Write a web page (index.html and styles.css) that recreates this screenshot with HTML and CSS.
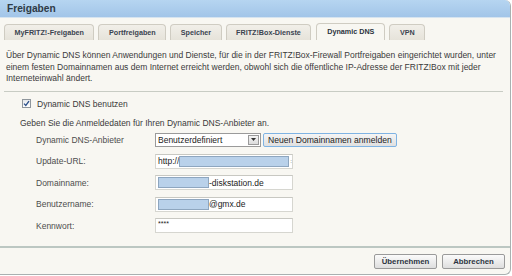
FILE: index.html
```html
<!DOCTYPE html>
<html lang="de">
<head>
<meta charset="utf-8">
<title>Freigaben</title>
<link rel="stylesheet" href="styles.css">
</head>
<body>
<div class="panel">
  <div class="header">Freigaben</div>
  <div class="tabs">
    <div class="tab">MyFRITZ!-Freigaben</div>
    <div class="tab">Portfreigaben</div>
    <div class="tab">Speicher</div>
    <div class="tab">FRITZ!Box-Dienste</div>
    <div class="tab active">Dynamic DNS</div>
    <div class="tab">VPN</div>
  </div>
  <div class="content">
    <p class="intro">Über Dynamic DNS können Anwendungen und Dienste, für die in der FRITZ!Box-Firewall Portfreigaben eingerichtet wurden, unter einem festen Domainnamen aus dem Internet erreicht werden, obwohl sich die öffentliche IP-Adresse der FRITZ!Box mit jeder Interneteinwahl ändert.</p>
    <div class="sep"></div>
    <label class="check-row"><span class="checkbox"><svg width="7" height="7" viewBox="0 0 7 7"><path d="M1 3.6 L2.8 5.4 L6 1.2" fill="none" stroke="#2a4f8a" stroke-width="1.3"/></svg></span>Dynamic DNS benutzen</label>
    <p class="hint">Geben Sie die Anmeldedaten für Ihren Dynamic DNS-Anbieter an.</p>
    <div class="form">
      <div class="label">Dynamic DNS-Anbieter</div>
      <div class="ctrl">
        <div class="select"><span class="sel-text">Benutzerdefiniert</span><span class="sel-arrow"><svg width="5" height="3" viewBox="0 0 5 3"><path d="M0 0 H5 L2.5 3 Z" fill="#333"/></svg></span></div>
        <div class="btn-new">Neuen Domainnamen anmelden</div>
      </div>
      <div class="label">Update-URL:</div>
      <div class="ctrl"><div class="input"><span>http://</span><span class="mask mask-url"></span><span class="tail">:</span></div></div>
      <div class="label">Domainname:</div>
      <div class="ctrl"><div class="input"><span class="mask mask-short"></span><span>-diskstation.de</span></div></div>
      <div class="label">Benutzername:</div>
      <div class="ctrl"><div class="input"><span class="mask mask-short"></span><span>@gmx.de</span></div></div>
      <div class="label">Kennwort:</div>
      <div class="ctrl"><div class="input pw"><span>****</span></div></div>
    </div>
  </div>
  <div class="footer">
    <div class="btn">Übernehmen</div>
    <div class="btn">Abbrechen</div>
  </div>
</div>
</body>
</html>
```
FILE: styles.css
```css
html, body {
  margin: 0;
  padding: 0;
  background: #ffffff;
}
body {
  font-family: "Liberation Sans", Arial, sans-serif;
  color: #333;
  width: 512px;
  height: 276px;
  overflow: hidden;
}
.panel {
  box-sizing: border-box;
  width: 511px;
  height: 275px;
  background: #f8f7f2;
  border-right: 1px solid #a9b0b0;
  border-bottom: 1px solid #a9b0b0;
  border-top-right-radius: 6px;
  border-bottom-right-radius: 6px;
  overflow: hidden;
  display: flex;
  flex-direction: column;
}
.header {
  height: 17px;
  line-height: 17px;
  padding-left: 7px;
  font-weight: bold;
  font-size: 10.2px;
  color: #2e3a46;
  background: linear-gradient(#b6d5f1, #a2c5e8);
  border-bottom: 1px solid #d6e4f0;
}
.tabs {
  display: flex;
  align-items: flex-end;
  gap: 4px;
  padding: 6px 4px 0 4px;
  height: 16px;
}
.tab {
  height: 15px;
  line-height: 15px;
  padding: 0 9.5px;
  font-size: 7.2px;
  font-weight: bold;
  color: #3b4450;
  background: linear-gradient(#f1efe9, #e6e3da);
  border: 1px solid #cfccc2;
  border-bottom: none;
  border-radius: 4px 4px 0 0;
}
.tab.active {
  height: 16px;
  line-height: 16px;
  background: #f8f7f2;
  color: #2c3440;
  padding: 0 10px;
  margin-left: 1px;
}
.content {
  padding: 10px 7px 0 6px;
  flex: 1;
}
.intro {
  margin: 0;
  font-size: 8.5px;
  line-height: 11.5px;
  color: #3a3a3a;
}
.sep {
  height: 0;
  border-top: 1px solid #c8ccc4;
  margin: 6px 0 0 -2px;
}
.check-row {
  display: flex;
  align-items: center;
  margin: 7px 0 0 16px;
  height: 10px;
  font-size: 8.5px;
  color: #3a3a3a;
}
.checkbox {
  box-sizing: border-box;
  width: 9px;
  height: 9px;
  border: 1px solid #8f969c;
  background: linear-gradient(#e7e9ec, #ffffff);
  margin-right: 6px;
  display: flex;
  align-items: center;
  justify-content: center;
}
.hint {
  margin: 9px 0 0 14px;
  font-size: 8.5px;
  line-height: 10px;
  color: #3a3a3a;
}
.form {
  display: grid;
  grid-template-columns: 119px auto;
  grid-auto-rows: 16px;
  row-gap: 5.5px;
  margin: 4px 0 0 30px;
}
.label {
  font-size: 8.5px;
  color: #4d4d4d;
  display: flex;
  align-items: center;
}
.ctrl {
  display: flex;
  align-items: center;
}
.select {
  box-sizing: border-box;
  width: 106px;
  height: 14px;
  border: 1px solid #9a9a9a;
  background: #fff;
  display: flex;
  align-items: center;
  font-size: 8.5px;
  color: #222;
}
.sel-text {
  flex: 1;
  padding-left: 2px;
}
.sel-arrow {
  box-sizing: border-box;
  width: 11px;
  height: 10px;
  margin-right: 1px;
  border: 1px solid #9a9a9a;
  background: linear-gradient(#f4f4f4, #dcdcdc);
  display: flex;
  align-items: center;
  justify-content: center;
}
.btn-new {
  box-sizing: border-box;
  margin-left: 2px;
  height: 14px;
  padding: 0 4px;
  display: flex;
  align-items: center;
  font-size: 8.6px;
  color: #222;
  border: 1px solid #7fb3e3;
  border-radius: 2px;
  background: linear-gradient(#f5f5f5, #e0e0e0);
}
.input {
  box-sizing: border-box;
  width: 138px;
  height: 15px;
  border: 1px solid #d6d6d0;
  border-top-color: #c8c8c2;
  background: #fff;
  display: flex;
  align-items: center;
  padding-left: 2px;
  font-size: 8.5px;
  color: #222;
}
.input.pw {
  align-items: flex-start;
  padding-top: 1px;
  font-size: 7px;
}
.mask {
  display: block;
  height: 11px;
  background: #b9d1ea;
  border: 1px solid #8ea6bf;
  box-sizing: border-box;
}
.mask-url {
  width: 111px;
}
.mask-short {
  width: 51px;
}
.tail {
  font-size: 6px;
  padding-left: 1px;
}
.footer {
  height: 26px;
  border-top: 2px solid #bcc7c2;
  display: flex;
  justify-content: flex-end;
  align-items: center;
  gap: 5px;
  padding-right: 5px;
}
.btn {
  box-sizing: border-box;
  height: 15px;
  min-width: 63px;
  display: flex;
  align-items: center;
  justify-content: center;
  font-size: 7.8px;
  font-weight: bold;
  color: #2c3440;
  border: 1px solid #9a9a9a;
  border-radius: 2px;
  background: linear-gradient(#fbfbfb, #dedede);
  padding: 0 6px;
}
```
